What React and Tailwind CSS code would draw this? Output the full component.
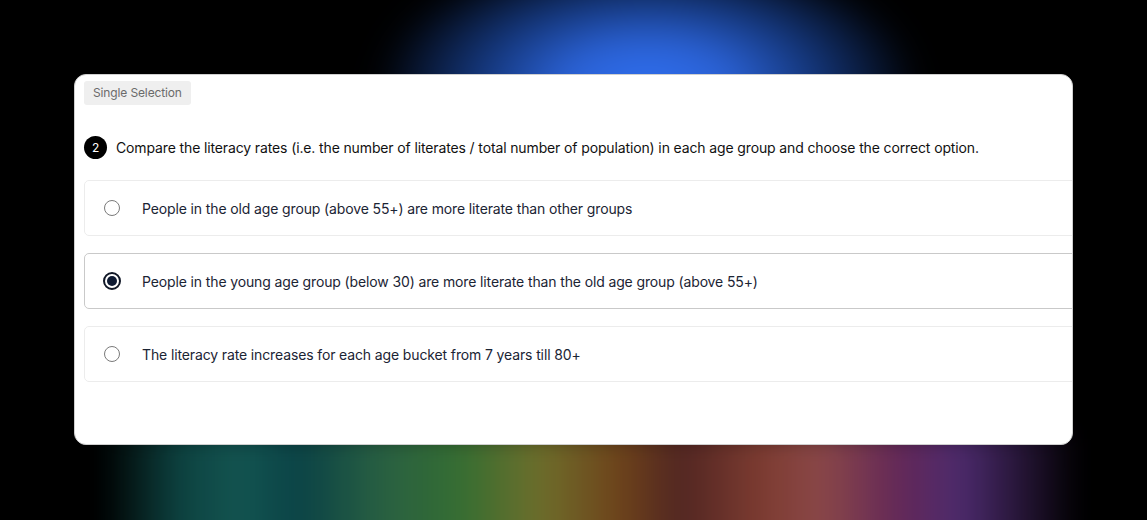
const options = [
  "People in the old age group (above 55+) are more literate than other groups",
  "People in the young age group (below 30) are more literate than the old age group (above 55+)",
  "The literacy rate increases for each age bucket from 7 years till 80+",
];

function Radio({ checked }) {
  return (
    <span className="flex h-[18px] w-[18px] shrink-0 items-center justify-center">
      {checked ? (
        <span className="flex h-[18px] w-[18px] items-center justify-center rounded-full border-2 border-[#111827]">
          <span className="h-[10px] w-[10px] rounded-full bg-[#0f1b33]" />
        </span>
      ) : (
        <span className="h-[16px] w-[16px] rounded-full border-[1.5px] border-[#7a7a7a]" />
      )}
    </span>
  );
}

export default function App() {
  const selected = 1;

  return (
    <div
      className="relative h-[520px] w-full overflow-hidden bg-black tracking-[-0.13px]"
      style={{ fontFamily: "Inter, 'Noto Sans', sans-serif" }}
    >
      {/* background glows */}
      <div className="pointer-events-none absolute left-[300px] top-[-90px] h-[200px] w-[620px] bg-[radial-gradient(ellipse_44%_70%_at_56%_88%,#2f6ff0_0%,#2b62d6_30%,#14367a_62%,transparent_100%)] blur-[16px]" />
      <div className="pointer-events-none absolute left-[100px] top-[430px] h-[130px] w-[1000px] bg-[linear-gradient(90deg,transparent_0%,#0f4a48_8%,#155e5a_14%,#0c4a4e_20%,#2d6a4a_28%,#3b7a38_36%,#7a7a30_44%,#7a4a1e_52%,#5a2a26_58%,#8a4236_66%,#9a5050_72%,#6e2c62_80%,#55307a_86%,transparent_98%)] blur-[14px] opacity-90" />

      <div className="relative pl-[74px] pt-[74px]">
        <div className="h-[371px] w-[999px] overflow-hidden rounded-[12px] border border-[#cfcfcf] bg-white pl-[9px] pt-[6px]">
          <div className="flex h-[24px] w-fit items-center rounded-[3px] bg-[#efefef] px-[9px] text-[12px] leading-none text-[#6b6b6b]">
            Single Selection
          </div>

          <div className="mt-[31px] flex items-center gap-[9px]">
            <span className="flex h-[23px] w-[23px] shrink-0 items-center justify-center rounded-full bg-black text-[12px] text-white">
              2
            </span>
            <p className="text-[14px] leading-[20px] text-[#111]">
              Compare the literacy rates (i.e. the number of literates / total number of population) in each age group and choose the correct option.
            </p>
          </div>

          <div className="mt-[21px] flex w-[1010px] flex-col gap-[17px]">
            {options.map((text, i) => (
              <div
                key={text}
                className={`flex h-[56px] items-center gap-[21px] rounded-[5px] border bg-white pl-[18px] ${
                  i === selected ? "border-[#c9c9c9]" : "border-[#ececec]"
                }`}
              >
                <Radio checked={i === selected} />
                <span className="text-[14px] text-[#1b2434]">{text}</span>
              </div>
            ))}
          </div>
        </div>
      </div>
    </div>
  );
}
